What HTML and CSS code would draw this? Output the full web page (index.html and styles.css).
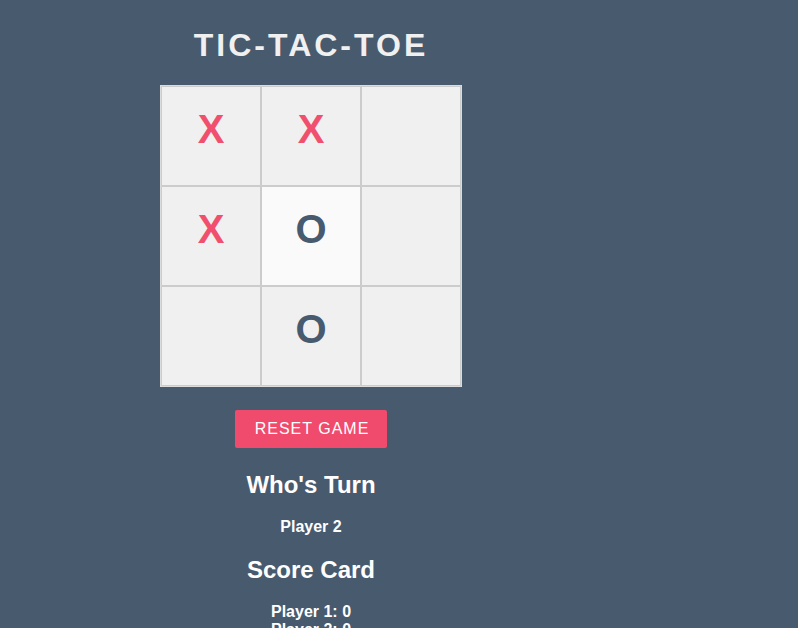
FILE: index.html
```html
<!DOCTYPE html>
<html>
<head>
<meta charset="utf-8">
<title>Tic-Tac-Toe</title>
<link rel="stylesheet" href="styles.css">
</head>
<body>
<div class="app">
  <h1 class="title">TIC-TAC-TOE</h1>
  <div class="board">
    <div class="cell x">X</div>
    <div class="cell x">X</div>
    <div class="cell"></div>
    <div class="cell x">X</div>
    <div class="cell o hover">O</div>
    <div class="cell"></div>
    <div class="cell"></div>
    <div class="cell o">O</div>
    <div class="cell"></div>
  </div>
  <button class="reset">RESET GAME</button>
  <h2 class="heading turn-heading">Who's Turn</h2>
  <p class="info turn">Player 2</p>
  <h2 class="heading score-heading">Score Card</h2>
  <p class="info scores">Player 1: 0<br>Player 2: 0</p>
</div>
</body>
</html>
```
FILE: styles.css
```css
html, body {
  margin: 0;
  padding: 0;
  background: #485a6e;
  overflow: hidden;
}

body {
  font-family: "Liberation Sans", Arial, sans-serif;
  color: #ffffff;
}

.app {
  width: 622px;
  display: flex;
  flex-direction: column;
  align-items: center;
}

.title {
  margin: 27px 0 21px;
  font-size: 32px;
  line-height: 37px;
  font-weight: bold;
  letter-spacing: 3px;
  color: #f0f0f0;
}

.board {
  display: grid;
  grid-template-columns: repeat(3, 100px);
  grid-template-rows: repeat(3, 100px);
  border: 1px solid #dcdcdc;
}

.cell {
  box-sizing: border-box;
  border: 1px solid #cccccc;
  background: #f0f0f0;
  text-align: center;
  font-size: 40px;
  font-weight: bold;
  line-height: 46px;
  padding-top: 19px;
}

.cell.hover {
  background: #fafafa;
}

.cell.x {
  color: #f0506e;
}

.cell.o {
  color: #485a6e;
}

.reset {
  margin-top: 23px;
  padding: 10px 18px 10px 20px;
  font-family: "Liberation Sans", Arial, sans-serif;
  font-size: 16px;
  line-height: 18px;
  letter-spacing: 1px;
  color: #ffffff;
  background: #f04b6d;
  border: none;
  border-radius: 2px;
}

.heading {
  margin: 23px 0 0;
  font-size: 24px;
  line-height: 28px;
  font-weight: bold;
}

.score-heading {
  margin-top: 20px;
}

.info {
  margin: 18px 0 0;
  font-size: 16px;
  line-height: 18px;
  font-weight: bold;
  text-align: center;
}

.turn {
  margin-top: 19px;
}

.scores {
  margin-top: 19px;
}
```
